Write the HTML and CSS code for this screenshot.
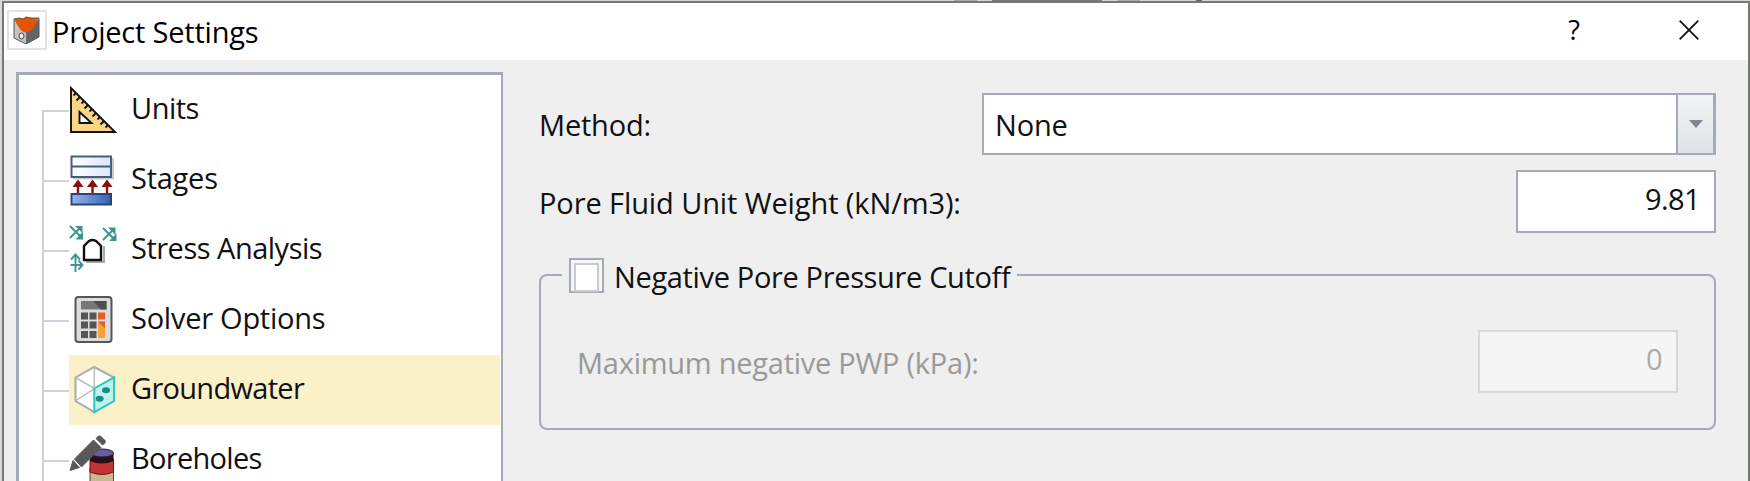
FILE: index.html
```
<!DOCTYPE html>
<html lang="en">
<head>
    <meta charset="UTF-8">
    <meta name="viewport" content="width=device-width, initial-scale=1.0">
    <title>Project Settings</title>
    <link rel="stylesheet" href="styles.css">
</head>
<body>
    <div class="window">
        <header class="titlebar">
            <span class="app-icon">
                <svg width="28" height="28" viewBox="0 0 28 28">
                    <path d="M1 4 L13 14 V28 L1 22 Z" fill="#c4c4c4"/>
                    <path d="M13 14 L26 3 V21 L13 28 Z" fill="#666"/>
                    <path d="M1 3 L6 2 L10 3 L13 1 L18 2 L26 2 L23 6 Q21 15 13 16.500 Q8 16 5 10 Z" fill="#e65304"/>
                    <path d="M1 3 L6 2 L10 3 L13 1 L18 2 L26 2 V21 L13 28 L1 22 Z" fill="none" stroke="#555"/>
                    <ellipse cx="8.500" cy="20" rx="2.500" ry="3" fill="#eee" stroke="#444"/>
                </svg>
            </span>
            <span class="title">Project Settings</span>
            <span class="help">?</span>
            <svg class="close" width="20" height="20" viewBox="0 0 20 20">
                <path d="M.7 .7 L19.3 19.3 M19.3 .7 L.7 19.3" stroke="#111" stroke-width="1.8"/>
            </svg>
        </header>

        <div class="content">
            <ul class="tree">
                <li class="item">
                    <svg class="icon" viewBox="0 0 48 48">
                        <path d="M2 2 V46 H46 Z M10.500 26 V37 H22.500 Z" fill="#fbd588" fill-rule="evenodd" stroke="#111" stroke-width="1.9"/>
                        <path d="M7 7 L4.500 9.500 M11 11 L7.500 14.500 M15 15 L12.500 17.500 M19 19 L15.500 22.500 M23 23 L20.500 25.500 M27 27 L23.500 30.500 M31 31 L28.500 33.500 M35 35 L31.500 38.500 M39 39 L36.500 41.500" stroke="#111" stroke-width="1.8"/>
                    </svg>
                    <span class="label">Units</span>
                </li>
                <li class="item">
                    <svg class="icon" viewBox="0 0 48 48">
                        <defs>
                            <linearGradient id="layer"><stop offset="0" stop-color="#fff"/><stop offset="1" stop-color="#dce6fb"/></linearGradient>
                            <linearGradient id="base"><stop offset="0" stop-color="#94b4f3"/><stop offset="1" stop-color="#3462b8"/></linearGradient>
                        </defs>
                        <path d="M4 22.500 H44 V2" fill="none" stroke="#ccc" stroke-width="2"/>
                        <path d="M2.500 .5 H42 V21 H2.500 Z M2.500 10.500 H42" fill="url(#layer)" stroke="#465f80" stroke-width="2"/>
                        <path d="M9 37 V28 M23.500 37 V28 M38 37 V28" stroke="#8b0f0f" stroke-width="2.400"/>
                        <path d="M9 23.500 L14.500 31 H3.500 Z M23.500 23.500 L29 31 H18 Z M38 23.500 L43.500 31 H32.500 Z" fill="#8b0f0f"/>
                        <path d="M2.500 38 H42 V48.500 H2.500 Z" fill="url(#base)" stroke="#2c456e" stroke-width="2"/>
                    </svg>
                    <span class="label stages">Stages</span>
                </li>
                <li class="item">
                    <svg class="icon" viewBox="0 0 48 48">
                        <g fill="none" stroke="#3d9490" stroke-width="1.900">
                            <path d="M1 0 L12 11 M1 12 L12 1"/>
                            <path d="M34 2 L45 13 M34 14 L45 3"/>
                            <path d="M6.500 46 V30 M1.500 39 H12"/>
                            <path d="M2 33.500 L6.500 28.500 L11 33.500 M9.500 34.500 L13.500 39 L9.500 43.500"/>
                        </g>
                        <path d="M6 0 H13.500 V7 Z M14 5.500 V13.500 H6.500 Z M39 1.500 H46.500 V9 Z M47.500 7.500 V15 H40 Z" fill="#3d9490"/>
                        <path d="M17 36 H35 V20" fill="none" stroke="#aaa" stroke-width="2"/>
                        <path d="M15 34 V20 L20 15 Q23.500 13 27 15 L32 20 V34 Z" fill="#fff" stroke="#111" stroke-width="2.400"/>
                    </svg>
                    <span class="label">Stress Analysis</span>
                </li>
                <li class="item">
                    <svg class="icon" viewBox="0 0 48 48">
                        <rect x="6.500" y="1" width="36" height="45" rx="3" fill="#dcdcdc" stroke="#555" stroke-width="2"/>
                        <rect x="12" y="5" width="25.500" height="8.500" fill="#777"/>
                        <path d="M24 5 H37.500 V13.500 H32 Z" fill="#4e4e4e"/>
                        <path d="M12 16.500 h7 v7 h-7z M20.500 16.500 h7 v7 h-7z M12 25.500 h7 v7 h-7z M20.500 25.500 h7 v7 h-7z M12 35 h7 v7 h-7z M20.500 35 h7 v7 h-7z" fill="#555"/>
                        <path d="M29 16.500 h7 v7 h-7z" fill="#e0622a"/>
                        <path d="M29 25.500 h7 v16.500 h-7z" fill="#f6a037"/>
                        <path d="M29 25.500 h7 v7z" fill="#e0622a"/>
                    </svg>
                    <span class="label stages">Solver Options</span>
                </li>
                <li class="item selected">
                    <svg class="icon" viewBox="0 0 48 48">
                        <path d="M25.300 1 L45 11.500 V35 L25.300 46 L6.500 35 V11.500 Z" fill="#fff" stroke="#aaa" stroke-width="2"/>
                        <path d="M6.500 11.500 L25.300 22.500 L45 11.500 M25.300 1 V22.500 L6.500 35" fill="none" stroke="#bbb" stroke-width="1.500"/>
                        <path d="M25.300 22.500 L45 11.500 V35 L25.300 46 Z" fill="#c1f1ec" stroke="#2bc9bb" stroke-width="2"/>
                        <ellipse cx="37" cy="24.300" rx="4" ry="3" fill="#188e89"/>
                        <ellipse cx="30.700" cy="32.700" rx="4" ry="3" fill="#188e89"/>
                    </svg>
                    <span class="label ground">Groundwater</span>
                </li>
                <li class="item">
                    <svg class="icon" viewBox="0 0 48 48">
                        <path d="M21 32 H44.500 V50 H21 Z" fill="#c8b992" stroke="#444"/>
                        <path d="M21 23 H44.500 V36 Q33 41 21 36 Z" fill="#c53335" stroke="#6b1518"/>
                        <path d="M21 17 H44.500 V25 Q33 30 21 25 Z" fill="#25101c"/>
                        <ellipse cx="33" cy="17" rx="11.500" ry="4" fill="#6b5ba8" stroke="#222"/>
                        <path d="M1 34.500 L4 24.500 L10.500 31.500 Z M5.500 23 L24.500 4 L32 11.500 L12.500 31 Z" fill="#595959" stroke="#595959"/>
                        <path d="M26.500 2.500 L29.500 -.500 Q31 -1 32.500 .5 L36.500 4.500 Q37.500 6 36 7.500 L33.500 9.500 Z" fill="#595959"/>
                    </svg>
                    <span class="label ground">Boreholes</span>
                </li>
            </ul>

            <main class="panel">
                <div class="row">
                    <span class="label method">Method:</span>
                    <div class="select">
                        <span class="value">None</span>
                        <span class="arrow"></span>
                    </div>
                </div>
                <div class="row">
                    <span class="label weight">Pore Fluid Unit Weight (kN/m3):</span>
                    <div class="field">9.81</div>
                </div>
                <fieldset class="group">
                    <legend class="legend">
                        <span class="checkbox"></span>
                        <span class="cutoff">Negative Pore Pressure Cutoff</span>
                    </legend>
                    <div class="row disabled">
                        <span class="label pwp">Maximum negative PWP (kPa):</span>
                        <div class="field">0</div>
                    </div>
                </fieldset>
            </main>
        </div>
    </div>
</body>
</html>
```
FILE: styles.css
```
* {
    box-sizing: border-box;
}

body {
    margin: 0;
    height: 481px;
    overflow: hidden;
    padding: 1px 0 0 2px;
    background: linear-gradient(90deg, #d8dad8 954px, #aaa 954px, #aaa 977px, #d8dad8 977px, #d8dad8 992px, #777 992px, #777 1102px, #d8dad8 1102px, #d8dad8 1117px, #aaa 1117px, #aaa 1140px, #d8dad8 1140px, #d8dad8 1196px, #666 1196px, #666 1202px, #d8dad8 1202px);
    font-family: "Open Sans", "Noto Sans", sans-serif;
    font-size: 29px;
    line-height: 40px;
    color: #111;
    white-space: nowrap;
}

.window {
    height: 480px;
    overflow: hidden;
    border: 2px solid #777977;
    border-bottom: 0;
    background: #efefef;
}

/* Title bar */
.titlebar {
    display: flex;
    align-items: center;
    height: 57px;
    padding: 0 49px 0 3px;
    background: #fff;
    color: #000;
}

.app-icon {
    display: flex;
    align-items: center;
    justify-content: center;
    width: 40px;
    height: 40px;
    margin-bottom: 4px;
    border: 2px solid #e2e2e2;
    border-radius: 2px;
}

.title {
    margin: 0 auto 0 5px;
    letter-spacing: -0.2px;
}

.help {
    font-size: 27px;
    margin: 0 99px 3px 0;
}

.close {
    margin-bottom: 3px;
}

.content {
    display: flex;
    padding: 12px 32px 0 12px;
}

/* Navigation tree */
.tree {
    width: 487px;
    height: 409px;
    margin: 0;
    padding: 0 0 0 23px;
    overflow: hidden;
    list-style: none;
    background: #fff;
    border: 3px solid #a4abb6;
    border-right-width: 2px;
    border-bottom: 0;
}

.item {
    display: flex;
    align-items: center;
    height: 70px;
    background: linear-gradient(#cdd3dc, #cdd3dc) 0 35px / 27px 2px no-repeat,
                linear-gradient(#cdd3dc, #cdd3dc) 0 0 / 2px 100% no-repeat;
    padding-left: 27px;
}

.item:first-child {
    background: linear-gradient(#cdd3dc, #cdd3dc) 0 35px / 27px 2px no-repeat,
                linear-gradient(#cdd3dc, #cdd3dc) 0 35px / 2px 35px no-repeat;
}

.item.selected {
    background: linear-gradient(#cdd3dc, #cdd3dc) 0 35px / 27px 2px no-repeat,
                linear-gradient(#cdd3dc, #cdd3dc) 0 0 / 2px 100% no-repeat,
                linear-gradient(#fbf1c9, #fbf1c9) 27px 0 / calc(100% - 28px) 100% no-repeat;
}

.icon {
    width: 48px;
    height: 48px;
    overflow: visible;
}

.item .label {
    margin: 0 0 4px 14px;
    letter-spacing: -0.5px;
}

.item .stages {
    letter-spacing: -0.25px;
}

.item .ground {
    letter-spacing: -0.7px;
}

/* Settings panel */
.panel {
    flex: 1;
    padding: 21px 0 0 36px;
}

.row {
    display: flex;
    align-items: center;
    justify-content: space-between;
    height: 62px;
    margin-bottom: 15px;
}

.method {
    padding-top: 2px;
    letter-spacing: -0.2px;
}

.weight {
    padding-top: 4px;
    letter-spacing: -0.1px;
}

.select {
    display: flex;
    width: 734px;
    height: 62px;
    border: 2px solid #a4abb6;
    border-right-width: 3px;
    background: #fff;
}

.value {
    flex: 1;
    padding: 10px 0 0 11px;
    letter-spacing: -0.2px;
}

.arrow {
    display: flex;
    align-items: center;
    justify-content: center;
    width: 37px;
    border-left: 2px solid #a4abb6;
    background: linear-gradient(#f2f3f4, #dfe3e6);
}

.arrow::after {
    content: "";
    border: 7px solid transparent;
    border-top: 8px solid #858392;
    border-bottom: 0;
}

.field {
    width: 200px;
    height: 63px;
    padding: 7px 14px 0 0;
    border: 2px solid #a4abb6;
    background: #fff;
    text-align: right;
    letter-spacing: -0.6px;
}

.group {
    height: 174px;
    margin: 24px 0 0;
    padding: 0 36px;
    border: 2px solid #a4abb6;
    border-radius: 8px;
}

.legend {
    display: flex;
    align-items: center;
    height: 37px;
    margin-left: -15px;
    padding: 2px 7px 0;
}

.checkbox {
    width: 35px;
    height: 35px;
    margin-right: 10px;
    padding: 3px;
    border: 2px solid #a4abb6;
    background: #f6f6f7;
}

.checkbox::before {
    content: "";
    display: block;
    height: 25px;
    border: 2px solid #c9cacf;
    background: #fff;
}

.cutoff {
    padding-top: 2px;
    letter-spacing: -0.35px;
}

.disabled {
    margin-top: 37px;
    color: #999;
}

.pwp {
    padding-top: 4px;
    letter-spacing: -0.25px;
}

.disabled .field {
    border-color: #d7d8de;
    background: #f5f5f5;
    color: #aaa;
}
```
